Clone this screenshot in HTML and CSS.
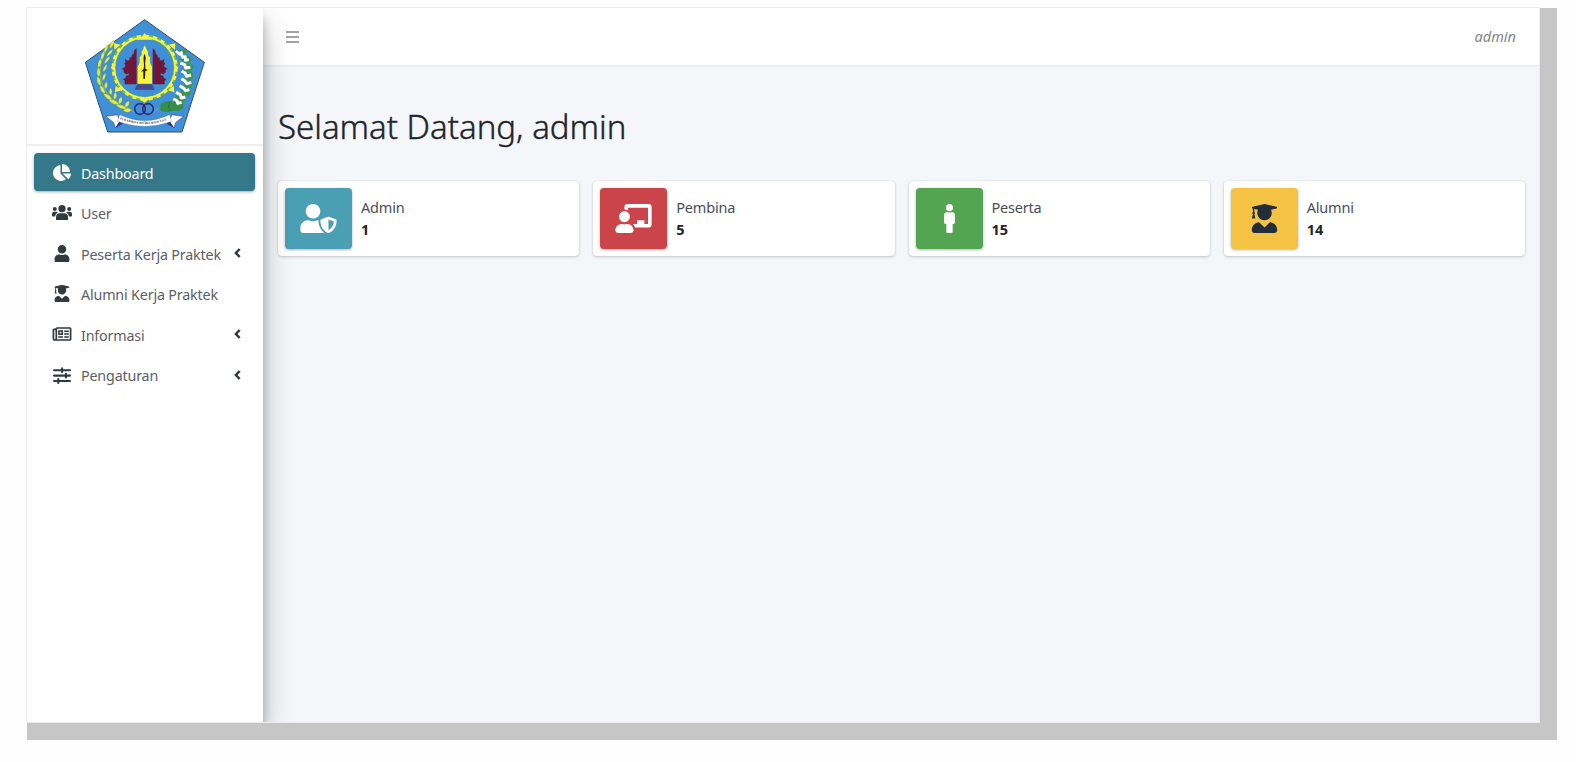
FILE: index.html
```html
<!DOCTYPE html>
<html lang="id">
<head>
<meta charset="utf-8">
<title>Dashboard</title>
<link rel="stylesheet" href="styles.css">
</head>
<body>
<svg class="defs" width="0" height="0">
  <symbol id="graduate" viewBox="0 0 448 512"><path d="M319.4 320.6L224 416l-95.4-95.4C57.1 323.7 0 382.2 0 454.4v9.6c0 26.5 21.5 48 48 48h352c26.5 0 48-21.5 48-48v-9.6c0-72.2-57.1-130.7-128.6-133.8zM13.6 79.8l6.4 1.5v58.4c-7 4.2-12 11.5-12 20.3 0 8.4 4.6 15.4 11.1 19.7L3.5 242c-1.7 6.9 2.1 14 7.6 14h41.8c5.5 0 9.3-7.1 7.6-14l-15.6-62.3C51.4 175.4 56 168.4 56 160c0-8.8-5-16.1-12-20.3V87.1l66 15.9c-8.6 17.2-14 36.4-14 57 0 70.7 57.3 128 128 128s128-57.3 128-128c0-20.6-5.3-39.8-14-57l96.3-23.2c18.2-4.4 18.2-27.1 0-31.5l-190.4-46c-13-3.1-26.7-3.1-39.7 0L13.6 48.2c-18.1 4.4-18.1 27.2 0 31.6z"/></symbol>
  <symbol id="chevron" viewBox="0 0 7 10"><path d="M5.700 1 1.900 5l3.800 4" fill="none" stroke="currentColor" stroke-width="2.500"/></symbol>
</svg>
<div class="screen">
  <div class="app">
    <aside class="sidebar">
      <div class="brand">
        <svg class="logo" viewBox="0 0 390 366">
          <path d="M194 14 373 142 306 351H83L16 142Z" fill="#4090d8" stroke="#30506c" stroke-width="3"/>
          <g fill="none" stroke="#6cc04a"><circle cx="194" cy="158" r="93" stroke-width="12" stroke-dasharray="19 5.6"/></g>
          <g fill="none" stroke="#f8f43c"><circle cx="194" cy="158" r="91" stroke-width="5"/><circle cx="194" cy="158" r="94" stroke-width="10" stroke-dasharray="12 12.600"/></g>
          <path d="m184 68 10-14 10 14 18 6h-56ZM103 104l-1-19 20 4ZM285 104l1-19-20 4ZM92 158l11-10v20ZM296 158l-11-10v20ZM107 212l-2 20 20-6ZM281 212l2 20-20-6ZM178 250l16 13 16-13Z" fill="#f8f43c"/>
          <g fill="#701638" stroke="#701638" stroke-width="1.500" stroke-linejoin="round">
            <path id="gate" d="M169 101v106h-34v-9l-5-5 7-3 2-7 8-2v-7l-9 3-6-5-1-9-5-2 7-3 4-5-3-9 4-3-3-8 7 4 8-1-1-8 5 1 3-10 5-2 1-10Z"/>
            <use href="#gate" transform="matrix(-1 0 0 1 388 0)"/>
          </g>
          <path d="m194 91-6 15-3 4v10l-6 7v16l-6 12v51h43v-51l-6-12v-16l-6-7v-10l-3-4Z" fill="#f8f43c"/>
          <path d="M193 116c8 13 1 23 3 35v11l8 3-8 3-1 23h-5v-23l-7 3 8-10c4-16-4-27 2-45Z" fill="#261b1d"/>
          <path d="M172 208h44l8 16h-60Z" fill="#403f87"/><path d="M170 213h48M166 219h56" stroke="#7478a7"/>
          <path d="M101 76C58 120 42 192 89 245q30 28 61 37" fill="none" stroke="#a8c83c" stroke-width="2"/>
          <g fill="#eced36" stroke="#5f9650" stroke-width=".8">
            <path d="M103 75q-15 9-14 26 14-9 14-26M85 88q-16 11-14 28 14-11 14-28M73 107q-15 14-9 28 12-11 9-28M63 130q-14 15-7 29 11-13 7-29M56 156q-11 18 1 30 8-14-1-30M53 183q-7 20 9 29 3-17-9-29M60 211q-1 19 15 26 1-18-15-26M99 103q-16 6-19 21 16-5 19-21M90 124q-16 7-17 22 15-7 17-22M81 148q-13 9-12 23 13-9 12-23M76 174q-12 11-8 23 12-10 8-23M80 200q-11 9-4 22 10-9 4-22M92 219q-9 12 1 21 7-10-1-21M107 232q-11 11-3 22 11-10 3-22M124 245q-13 10-6 22 13-8 6-22M147 258q-15 5-11 19 15-3 11-19M70 235q7 19 26 20-5-18-26-20M86 254q12 17 31 15-10-17-31-15M108 270q14 15 33 11-13-15-33-11M129 286q16-12 25-1-10 13-25 1"/>
          </g>
          <g fill="#3d9555"><ellipse cx="307" cy="111" rx="16" ry="8"/><ellipse cx="318" cy="133" rx="17" ry="11"/><ellipse cx="324" cy="157" rx="16" ry="12"/><ellipse cx="327" cy="182" rx="14" ry="13"/><ellipse cx="325" cy="207" rx="14" ry="13"/><ellipse cx="317" cy="232" rx="16" ry="13"/><ellipse cx="300" cy="253" rx="17" ry="15"/></g>
          <path d="M245 264q25-9 36-4l13-9q16 8 17 28l-14 9q-23-2-34 4l-20-3q-6-12 2-25Z" fill="#378e49"/><path d="M270 260q-9 15 2 28" fill="none" stroke="#246e48" stroke-width="3"/>
          <path d="m288 108 11 10 5-6 3 15 9-2v11l10-2" fill="none" stroke="#fff" stroke-width="8" stroke-linejoin="round"/>
          <path d="m301 144 13 5 3 10 14-2M305 168l11 7 4 9 13-4M304 191l11 7 6 8 13-4M299 212l12 8 6 7 11-3M288 232l13 7 3 10 12-3M280 252l11 5 2 8 12-3" fill="none" stroke="#fff" stroke-width="9" stroke-linejoin="round"/>
          <g fill="none" stroke="#332b73" stroke-width="5"><circle cx="180" cy="282" r="16"/><circle cx="204" cy="282" r="16"/></g>
          <path d="m152 282 9 9M223 291l13-11" stroke="#a5afab" stroke-width="2"/>
          <path d="m77 304 36-5 7 23-14 17-5-16ZM311 304l-36-5-7 23 14 17 5-16Z" fill="#fff" stroke="#38409b" stroke-width="2"/>
          <path d="m106 339 13-22 9 9ZM282 339l-13-22-9 9Z" fill="#343689"/>
          <path d="M119 299q75 36 150 0l6 20q-81 30-162 0Z" fill="#fff" stroke="#6b78ac"/>
          <path id="motto" d="M119 312q75 30 151 0" fill="none"/>
          <text class="motto" textLength="143"><textPath href="#motto" textLength="143">PURADHIPA BHARA BHAVANA</textPath></text>
        </svg>
      </div>
      <nav class="nav">
        <a class="item active"><svg class="ico" viewBox="0 0 544 512"><path d="M527.79 288H290.5l158.03 158.03c6.04 6.04 15.98 6.53 22.19.68 38.7-36.46 65.32-85.61 73.13-140.86 1.34-9.46-6.51-17.85-16.06-17.85zm-15.83-64.8C503.72 103.74 408.26 8.28 288.8.04 279.68-.59 272 7.1 272 16.24V240h223.77c9.14 0 16.82-7.68 16.19-16.8zM224 288V50.71c0-9.55-8.39-17.4-17.84-16.06C86.99 51.49-4.1 155.6.14 280.37 4.5 408.51 114.83 513.59 243.03 511.98c50.4-.63 96.97-16.87 135.26-44.03 7.9-5.6 8.42-17.23 1.57-24.08L224 288z"/></svg><span class="label">Dashboard</span></a>
        <a class="item"><svg class="ico" viewBox="0 0 20 16"><circle cx="10" cy="4.200" r="3.600"/><circle cx="2.800" cy="4.400" r="2"/><circle cx="17.200" cy="4.400" r="2"/><path d="M4 15v-2.300q0-4 4-4h4q4 0 4 4V15q0 .6-.8.6H4.800Q4 15.600 4 15ZM0 11V9.500Q0 7.300 2.200 7.300h2q1 0 1.500.6Q3.500 9 3 12H.8Q0 12 0 11ZM20 11V9.500q0-2.200-2.200-2.200h-2q-1 0-1.500.6Q16.500 9 17 12h2.200q.8 0 .8-1Z"/></svg><span class="label">User</span></a>
        <a class="item"><svg class="ico" viewBox="0 0 448 512"><path d="M224 256c70.700 0 128-57.300 128-128S294.700 0 224 0 96 57.300 96 128s57.300 128 128 128zm89.600 32h-16.700c-22.200 10.200-46.900 16-72.900 16s-50.600-5.800-72.900-16h-16.700C60.200 288 0 348.200 0 422.400V464c0 26.500 21.500 48 48 48h352c26.500 0 48-21.500 48-48v-41.600c0-74.200-60.200-134.400-134.400-134.400z"/></svg><span class="label">Peserta Kerja Praktek</span><svg class="arrow"><use href="#chevron"/></svg></a>
        <a class="item"><svg class="ico"><use href="#graduate"/></svg><span class="label">Alumni Kerja Praktek</span></a>
        <a class="item"><svg class="ico news" viewBox="0 0 19 14"><path fill="none" stroke="currentColor" stroke-width="1.700" d="M3.800 1h13.500q.8 0 .8.8v10.400q0 .8-.8.8H2.500Q.9 13 .9 11.500V3.300q0-1 1-1h1.400M3.800 1v10.500q0 1.400-1.200 1.400"/><path d="M5.700 3.300h4.800v4.700H5.700ZM11.700 3.500h4.600v1.500h-4.600ZM11.700 6.200h4.600v1.500h-4.600ZM5.700 9.200h4.800v1.500H5.700ZM11.700 9.200h4.600v1.500h-4.600Z"/><path fill="#fff" d="M7.200 4.800h1.700v1.600H7.200z"/></svg><span class="label">Informasi</span><svg class="arrow"><use href="#chevron"/></svg></a>
        <a class="item"><svg class="ico sliders" viewBox="0 0 17 16"><path fill="none" stroke="currentColor" stroke-width="2" stroke-linecap="round" d="M1 3h15M1 8.100h15M1 13.200h15M8.600 1.200v3.600M12.200 6.300v3.600M5 11.400V15"/></svg><span class="label">Pengaturan</span><svg class="arrow"><use href="#chevron"/></svg></a>
      </nav>
    </aside>
    <div class="main">
      <header class="topbar">
        <svg class="menu" viewBox="0 0 13 12"><path d="M0 1h13M0 6h13M0 11h13" stroke="currentColor" stroke-width="1.600"/></svg>
        <em class="account">admin</em>
      </header>
      <main class="content">
        <h1 class="title">Selamat Datang, admin</h1>
        <div class="cards">
          <section class="card"><div class="tile info"><svg viewBox="0 0 640 512"><path d="M622.300 271.100l-115.200-45c-4.100-1.600-12.600-3.700-22.200 0l-115.200 45c-10.700 4.200-17.700 14-17.700 24.900 0 111.600 68.700 188.800 132.900 213.900 9.600 3.700 18 1.600 22.200 0C558.400 489.900 640 420.500 640 296c0-10.900-7-20.700-17.700-24.900zM496 462.400V273.300l95.500 37.300c-5.600 87.100-60.900 135.400-95.500 151.800zM224 256c70.700 0 128-57.300 128-128S294.700 0 224 0 96 57.300 96 128s57.300 128 128 128zm96 40c0-2.500.8-4.800 1.100-7.200-2.500-.1-4.900-.8-7.500-.8h-16.700c-22.200 10.200-46.900 16-72.900 16s-50.600-5.800-72.900-16h-16.700C60.200 288 0 348.200 0 422.400V464c0 26.500 21.500 48 48 48h352c6.800 0 13.300-1.500 19.200-4-54-42.900-99.200-116.700-99.200-212z"/></svg></div><div class="stat"><span>Admin</span><b>1</b></div></section>
          <section class="card"><div class="tile danger"><svg viewBox="0 0 640 512"><path d="M208 352c-2.390 0-4.780.35-7.060 1.090C187.980 357.300 174.350 360 160 360c-14.350 0-27.980-2.700-40.950-6.910-2.280-.74-4.660-1.090-7.050-1.090C49.940 352-.33 402.480 0 464.620.14 490.880 21.730 512 48 512h224c26.270 0 47.860-21.120 48-47.380.33-62.140-49.940-112.620-112-112.620zm-48-32c53.020 0 96-42.980 96-96s-42.980-96-96-96-96 42.980-96 96 42.980 96 96 96zM592 0H208c-26.470 0-48 22.250-48 49.590V96c23.420 0 45.100 6.780 64 17.800V64h352v288h-64v-64H384v64h-76.240c19.100 16.690 33.120 38.730 39.690 64H592c26.470 0 48-22.250 48-49.590V49.590C640 22.250 618.470 0 592 0z"/></svg></div><div class="stat"><span>Pembina</span><b>5</b></div></section>
          <section class="card"><div class="tile success"><svg viewBox="0 0 192 512"><path d="M96 0c35.346 0 64 28.654 64 64s-28.654 64-64 64-64-28.654-64-64S60.654 0 96 0m48 144h-11.360c-22.711 10.443-49.590 10.894-73.280 0H48c-26.510 0-48 21.490-48 48v136c0 13.255 10.745 24 24 24h16v136c0 13.255 10.745 24 24 24h64c13.255 0 24-10.745 24-24V352h16c13.255 0 24-10.745 24-24V192c0-26.510-21.490-48-48-48z"/></svg></div><div class="stat"><span>Peserta</span><b>15</b></div></section>
          <section class="card"><div class="tile warning"><svg><use href="#graduate"/></svg></div><div class="stat"><span>Alumni</span><b>14</b></div></section>
        </div>
      </main>
    </div>
  </div>
</div>
</body>
</html>
```
FILE: styles.css
```css
* { box-sizing: border-box; }
body { margin: 0; background: #fefefe; color: #212529; font: 15px/22px "Noto Sans", "Open Sans", sans-serif; overflow: hidden; }
.defs { display: block; }
svg { fill: currentColor; }
.screen { display: flow-root; width: 1530px; height: 732px; margin: 8px 0 0 27px; background: #c6c6c6; }
.app { display: flex; width: 1514px; height: 716px; margin: -1px 0 0 -1px; border: 1px solid #ececee; background: #f4f6fa; overflow: hidden; }
.sidebar { flex: 0 0 236px; z-index: 1; background: #fff; box-shadow: 0 14px 28px rgba(0,0,0,.25), 0 10px 10px rgba(0,0,0,.22); }
.brand { height: 138px; padding-top: 7px; border-bottom: 2px solid #efeff1; display: flex; justify-content: center; align-items: flex-start; }
.logo { width: 130px; height: 122px; }
.motto { font: bold 9px "Liberation Serif", serif; fill: #333; }
.nav { display: flex; flex-direction: column; gap: 2.6px; padding: 7px 8px 0 7px; }
.item { display: flex; align-items: center; height: 38px; padding: 0 14px 0 18px; border-radius: 4px; color: #32393f; }
.active { background: #35788a; color: #fff; box-shadow: 0 1px 3px rgba(0,0,0,.35); }
.ico { width: 20px; height: 17px; margin-right: 9px; }
.news { height: 14px; }
.sliders { margin-top: 1px; }
.label { flex: 1; white-space: nowrap; font-size: 14.300px; letter-spacing: -.17px; color: #5b6065; padding-top: 3px; }
.active .label { color: #fff; }
.arrow { width: 7px; height: 10px; }
.main { flex: 1; }
.topbar { height: 59px; display: flex; justify-content: space-between; align-items: center; padding: 0 23px 0 23px; background: #fff; border-bottom: 2px solid #eceef1; color: #858585; }
.menu { width: 13px; height: 12px; }
.account { font-size: 14.500px; margin-top: -2px; }
.content { padding: 38px 14px 0 15px; }
.title { margin: 0; height: 76px; font-size: 33px; line-height: 44px; font-weight: 300; letter-spacing: 0; -webkit-text-stroke: .4px currentColor; white-space: nowrap; }
.cards { display: grid; grid-template-columns: repeat(4, 1fr); gap: 14px; }
.card { display: flex; height: 75px; padding: 7px; background: #fff; border-radius: 4px; box-shadow: 0 0 1px rgba(0,0,0,.13), 0 1px 3px rgba(0,0,0,.2); }
.tile { width: 67px; height: 61px; border-radius: 4px; display: flex; align-items: center; justify-content: center; color: #fff; box-shadow: 0 1px 3px rgba(0,0,0,.3); }
.tile svg { width: 37px; height: 29px; }
.info { background: #4b9fb4; }
.danger { background: #cb444a; }
.success { background: #54a551; }
.warning { background: #f5c344; color: #222d3a; }
.stat { display: flex; flex-direction: column; justify-content: center; padding: 0 0 2px 9px; font-size: 14.500px; }
.stat span { color: #4a4e53; letter-spacing: -.2px; }
```
